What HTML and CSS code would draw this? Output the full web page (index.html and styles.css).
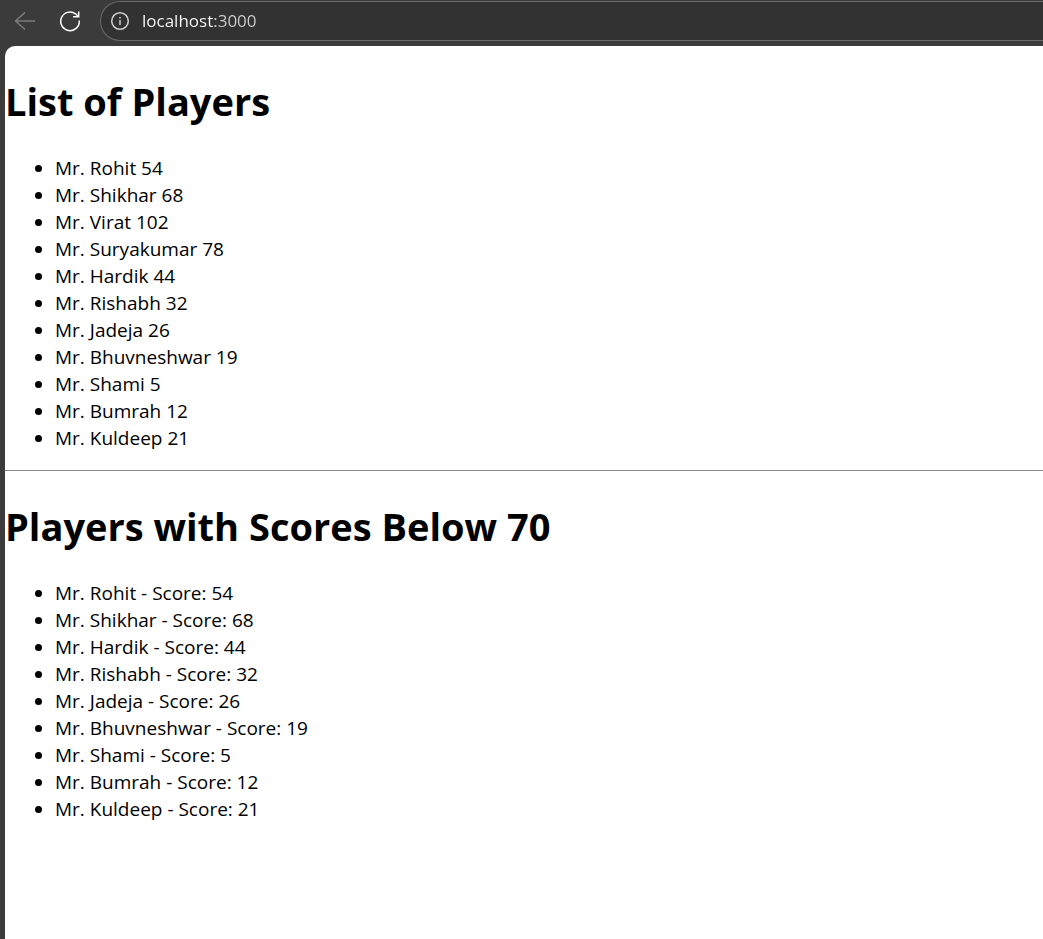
FILE: index.html
```html
<!DOCTYPE html>
<html lang="en">
<head>
<meta charset="utf-8">
<title>List of Players</title>
<link rel="stylesheet" href="styles.css">
</head>
<body>
<header class="toolbar">
  <button class="tool" type="button" aria-label="Back" disabled>
    <svg width="24" height="24" viewBox="0 0 24 24"><path d="M22 12H2.500M12 3.500L2.500 12L12 20.500"/></svg>
  </button>
  <button class="tool" type="button" aria-label="Reload">
    <svg width="24" height="24" viewBox="0 0 24 24"><path d="M21.300 11.500A9.300 9.300 0 1 1 17.500 4.800L20.700 7.800M20.700 2.500V7.800H15"/></svg>
  </button>
  <div class="address">
    <svg width="20" height="20" viewBox="0 0 20 20"><circle cx="10" cy="10" r="8.300"/><path d="M10 9v5M10 6v1.500"/></svg>
    <input class="url" type="text" aria-label="Address" value="localhost:3000">
  </div>
</header>
<main class="page">
  <h1 class="title">List of Players</h1>
  <ul class="players">
    <li>Mr. Rohit 54</li>
    <li>Mr. Shikhar 68</li>
    <li>Mr. Virat 102</li>
    <li>Mr. Suryakumar 78</li>
    <li>Mr. Hardik 44</li>
    <li>Mr. Rishabh 32</li>
    <li>Mr. Jadeja 26</li>
    <li>Mr. Bhuvneshwar 19</li>
    <li>Mr. Shami 5</li>
    <li>Mr. Bumrah 12</li>
    <li>Mr. Kuldeep 21</li>
  </ul>
  <hr class="rule">
  <h1 class="title">Players with Scores Below 70</h1>
  <ul class="players">
    <li>Mr. Rohit - Score: 54</li>
    <li>Mr. Shikhar - Score: 68</li>
    <li>Mr. Hardik - Score: 44</li>
    <li>Mr. Rishabh - Score: 32</li>
    <li>Mr. Jadeja - Score: 26</li>
    <li>Mr. Bhuvneshwar - Score: 19</li>
    <li>Mr. Shami - Score: 5</li>
    <li>Mr. Bumrah - Score: 12</li>
    <li>Mr. Kuldeep - Score: 21</li>
  </ul>
</main>
</body>
</html>
```

FILE: styles.css
```css
* { box-sizing: border-box; }
body {
  margin: 0;
  min-height: 100vh;
  display: flex;
  flex-direction: column;
  background: #3b3b3b;
  font-family: "Open Sans", "Noto Sans", sans-serif;
}
.toolbar {
  display: flex;
  align-items: center;
  height: 46px;
  padding: 0 0 5px 13px;
}
.tool {
  display: flex;
  width: 24px;
  margin-right: 21px;
  padding: 0;
  border: 0;
  background: none;
  color: #ffffff;
}
.tool:disabled { color: #7c7c7c; }
svg {
  flex: none;
  fill: none;
  stroke: currentColor;
  stroke-width: 1.5;
}
.address {
  display: flex;
  flex: 1;
  align-items: center;
  gap: 12px;
  height: 40px;
  margin-left: -3px;
  padding-left: 9px;
  border: 1px solid #6a6a6a;
  border-right: 0;
  border-radius: 20px 0 0 20px;
  background: #323232;
  color: #d0d0d0;
}
.url {
  flex: 1;
  min-width: 0;
  padding: 0;
  border: 0;
  outline: 0;
  background: linear-gradient(to right, #ffffff 73px, #d0d0d0 73px);
  background-clip: text;
  color: transparent;
  font: 17px "Open Sans", "Noto Sans", sans-serif;
}
.page {
  flex: 1;
  margin-left: 5px;
  padding-top: 28px;
  border-top-left-radius: 10px;
  background: #ffffff;
  color: #000000;
}
.title {
  margin: 0 0 27px;
  font-size: 38px;
  line-height: 54px;
}
.players {
  margin: 0;
  padding-left: 50px;
  font-size: 19px;
  line-height: 27px;
}
.rule {
  margin: 18px 0 28px;
  border: 0;
  border-top: 1px solid #8a8a8a;
}
```
